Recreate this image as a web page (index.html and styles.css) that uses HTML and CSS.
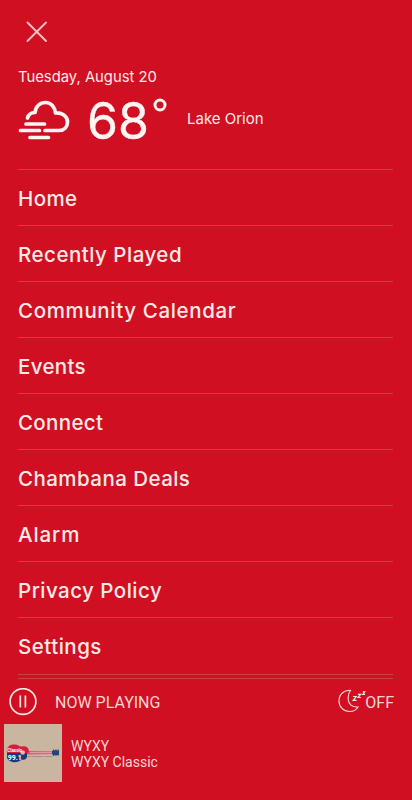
FILE: index.html
```html
<!DOCTYPE html>
<html lang="en">
<head>
<meta charset="utf-8">
<title>Menu</title>
<link rel="stylesheet" href="styles.css">
</head>
<body>
<div class="app">
  <header class="top">
    <button class="close" aria-label="Close">
      <svg width="22" height="22" viewBox="0 0 22 22"><path d="M1.500 1.500l18.500 18.500M20 1.500l-18.500 18.500"/></svg>
    </button>
    <div class="date">Tuesday, August 20</div>
    <div class="weather">
      <svg class="cloud" width="54" height="42" viewBox="0 0 54 42">
        <path d="M9.500 20C10.500 16.500 13.500 14.500 17 14.500C17.500 8.500 22 4.500 27.500 4.500C33 4.500 37 9 37.500 15C45 14.500 49.500 19 49.500 24C49.500 29 46 32.500 41 32.500H27"/>
        <path d="M8 26H26.500M2.500 32.500H21.500M12 39.500H30.500"/>
      </svg>
      <div class="temp">68</div>
      <svg class="degree" width="14" height="14" viewBox="0 0 14 14"><circle cx="7" cy="7" r="5"/></svg>
      <div class="city">Lake Orion</div>
    </div>
  </header>
  <nav class="menu">
    <a class="item home">Home</a>
    <a class="item recent">Recently Played</a>
    <a class="item calendar">Community Calendar</a>
    <a class="item events">Events</a>
    <a class="item connect">Connect</a>
    <a class="item deals">Chambana Deals</a>
    <a class="item alarm">Alarm</a>
    <a class="item privacy">Privacy Policy</a>
    <a class="item settings">Settings</a>
  </nav>
  <footer class="player">
    <div class="controls">
      <svg class="pause" width="28" height="28" viewBox="0 0 28 28"><circle cx="14" cy="13.500" r="12.900"/><path d="M11.300 7.500v12M16.400 7.500v12"/></svg>
      <span class="now">NOW PLAYING</span>
      <svg class="sleep" width="28" height="24" viewBox="0 0 28 24">
        <path class="moon" d="M12.500 1.500C6 .8 1 5.500 1 11.700C1 18 5.500 22.500 11.500 22.500C15.500 22.500 18.500 20.800 20 18C14 18.500 10.500 15 10.200 10.500C10 6.500 10.500 4 12.500 1.500Z"/>
        <path class="zs" d="M15 7.500h3.200l-3 3.800h3.300M20 5.300h2.600l-2.500 3.200h2.800M24.800 2.800h2l-2 2.600h2.200"/>
      </svg>
      <span class="off">OFF</span>
    </div>
    <div class="track">
      <svg class="cover" width="58" height="58" viewBox="0 0 58 58">
        <rect width="58" height="58" fill="#c9b5a0"/>
        <path d="M22 27L50 27.400V30L22 30.500Z" fill="#df526a"/>
        <path d="M26 28.700H48" stroke="#ead0cf" stroke-width=".7"/>
        <path d="M48 27l2-.8 5 .3v4.500l-5 .2-2-1Z" fill="#20447b"/>
        <path d="M49.500 25.500v6.500M52 25.300v6.500M54.300 25.500v6" stroke="#20447b" stroke-width="1"/>
        <path d="M3 29C2 23 6 20 10 20.500C14 20 15 23 18 22.500C22 21.500 25 24 25 27.500L22 30H3Z" fill="#d5203b"/>
        <path d="M3 29H23V33C22 36 20 36 17.500 35.500C14 39.500 5 39 3 34Z" fill="#173c78"/>
        <circle cx="18.700" cy="28.500" r="2.300" fill="#e7b3b4"/>
        <text class="logo-name" x="3.300" y="27.800">Classic</text>
        <text class="logo-freq" x="3.800" y="35.500">99.1</text>
        <text class="logo-tag" x="23" y="33.300">The Heartland's Highway</text>
      </svg>
      <div class="meta"><div class="station">WYXY</div><div class="title">WYXY Classic</div></div>
    </div>
  </footer>
</div>
</body>
</html>
```
FILE: styles.css
```css
* { box-sizing: border-box; }
body { margin: 0; background: #d01022; color: #ffe9e7; font-family: Inter, "Liberation Sans", sans-serif; }
svg { display: block; flex: none; fill: none; }
.app { width: 412px; height: 800px; overflow: hidden; }
.top { height: 169px; padding: 21px 18px 0; }
.close { display: block; margin: 0 0 0 8px; padding: 0; border: 0; background: none; }
.close svg { stroke: #ffc4c2; stroke-width: 1.9; stroke-linecap: round; }
.date { margin-top: 24px; height: 20px; line-height: 20px; font-size: 14.800px; white-space: nowrap; }
.weather { display: flex; align-items: flex-start; margin-top: 12px; height: 44px; }
.cloud { margin-top: -1px; stroke: #fff5f3; stroke-width: 3.700; stroke-linecap: round; stroke-linejoin: round; }
.temp { width: 63px; margin: -8px 0 0 15px; line-height: 60px; font-size: 50px; font-weight: 400; color: #fff5f3; -webkit-text-stroke: .4px #fff5f3; }
.degree { margin: -1px 0 0 3px; stroke: #fff5f3; stroke-width: 3; }
.city { margin: 10px 0 0 20px; line-height: 20px; font-size: 15px; white-space: nowrap; }
.menu { margin: 0 19px 0 18px; border-bottom: 1px solid #c84048; height: 506px; }
.item { display: block; height: 56px; border-top: 1px solid #c84048; line-height: 58px; font-size: 20.500px; font-weight: 500; white-space: nowrap; }
.home { letter-spacing: .4px; }
.recent { letter-spacing: .5px; }
.calendar { letter-spacing: .64px; }
.events, .connect { letter-spacing: .33px; }
.deals { letter-spacing: .45px; }
.alarm { letter-spacing: .9px; }
.privacy { letter-spacing: .48px; }
.settings { letter-spacing: .5px; }
.player { color: #ffd5d3; font-family: Roboto, sans-serif; }
.controls { display: flex; align-items: center; width: 375px; height: 47px; margin: 3px 0 0 18px; border-top: 1px solid #c84048; }
.pause { margin-left: -9px; stroke: #ffe1df; stroke-width: 1.700; }
.now { margin-left: 18px; font-size: 16px; }
.sleep { margin: -2px -1px 0 auto; }
.moon { stroke: #ffd5d3; stroke-width: 1.100; }
.zs { stroke: #ffe9e7; stroke-width: 1.200; }
.off { margin-right: -1px; font-size: 16px; }
.track { display: flex; margin: -1px 0 0 4px; }
.meta { margin: 14px 0 0 9px; font-size: 14px; line-height: 16px; }
.logo-name { font: bold 4.500px Roboto, sans-serif; fill: #fff; }
.logo-freq { font: bold 7px Roboto, sans-serif; fill: #fff; }
.logo-tag { font: 2.300px Roboto, sans-serif; fill: #526384; }
```
